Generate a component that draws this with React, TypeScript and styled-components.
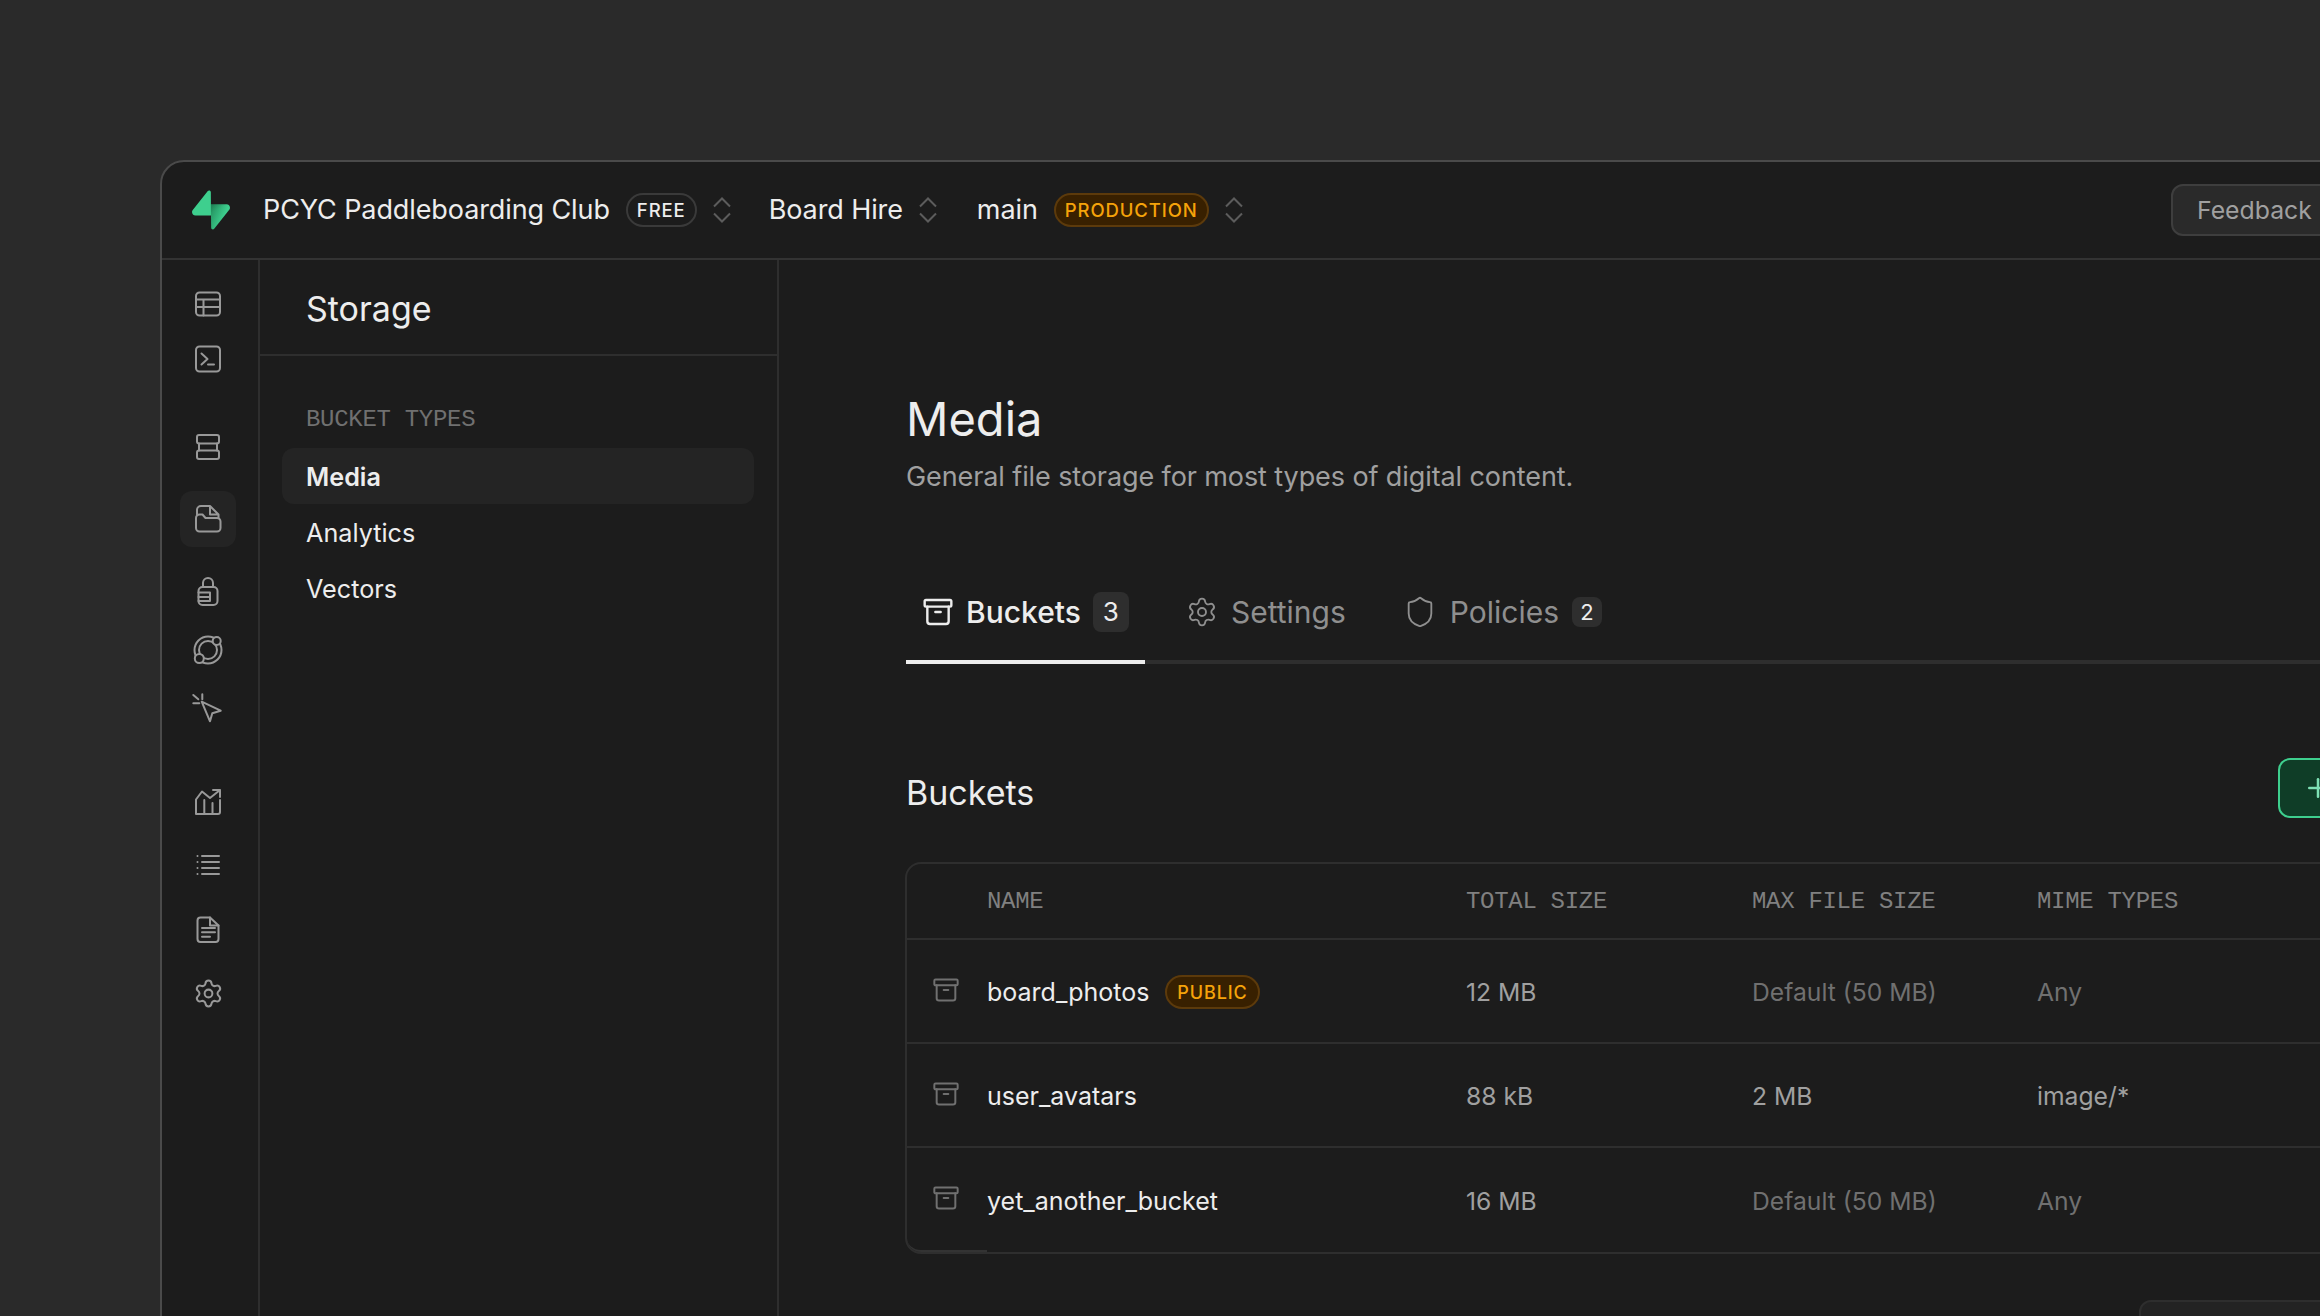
import React from 'react';
import styled, { createGlobalStyle } from 'styled-components';
import { Archive, Plus, Settings, Shield } from 'lucide-react';

const SANS = '"Inter", "Liberation Sans", sans-serif';
const MONO = '"Liberation Mono", monospace';

const GlobalStyle = createGlobalStyle`
  html, body {
    margin: 0;
    padding: 0;
    background: #2a2a2a;
    font-family: ${SANS};
    color: #ededed;
  }
  * {
    box-sizing: border-box;
  }
`;

const Page = styled.div`
  width: 100vw;
  height: 100vh;
  overflow: hidden;
  padding: 160px 0 0 160px;
  background: #2a2a2a;
`;

const Window = styled.div`
  width: 2400px;
  height: 1400px;
  display: flex;
  flex-direction: column;
  background: #1c1c1c;
  border: 2px solid #4a4a4a;
  border-radius: 24px 0 0 0;
`;

const Header = styled.header`
  height: 98px;
  flex: none;
  display: flex;
  align-items: center;
  padding: 0 219px 0 30px;
  border-bottom: 2px solid #333333;
`;

const Logo = styled.svg`
  width: 38px;
  height: 40px;
  margin-right: 33px;
  flex: none;
`;

const Crumb = styled.span`
  font-size: 27px;
  line-height: 40px;
  letter-spacing: -0.1px;
  white-space: nowrap;
  color: #ededed;
`;

const Pill = styled.span<{ $amber?: boolean }>`
  height: 34px;
  display: inline-flex;
  align-items: center;
  margin-left: 16px;
  padding: 0 9px;
  border-radius: 17px;
  font-size: 18.5px;
  font-weight: 500;
  letter-spacing: 0.9px;
  white-space: nowrap;
  border: 2px solid ${({ $amber }) => ($amber ? '#5c3a0b' : '#3a3a3a')};
  background: ${({ $amber }) => ($amber ? '#382000' : 'transparent')};
  color: ${({ $amber }) => ($amber ? '#f5a30a' : '#ededed')};
`;

const Updown = styled.svg<{ $after: number }>`
  width: 18px;
  height: 26px;
  margin: 0 ${({ $after }) => $after}px 0 16px;
  flex: none;
  fill: none;
  stroke: #5c5c5c;
  stroke-width: 2;
`;

const Feedback = styled.button`
  margin-left: auto;
  width: 168px;
  height: 52px;
  flex: none;
  padding: 0 0 0 24px;
  text-align: left;
  white-space: nowrap;
  font-family: ${SANS};
  font-size: 24.8px;
  color: #a0a0a0;
  background: #2a2a2a;
  border: 2px solid #3e3e3e;
  border-radius: 12px;
`;

const Body = styled.div`
  flex: 1;
  display: flex;
  min-height: 0;
`;

const Rail = styled.nav`
  width: 98px;
  flex: none;
  display: flex;
  flex-direction: column;
  align-items: center;
  padding-top: 16px;
  padding-right: 4px;
  border-right: 2px solid #2e2e2e;
`;

const RailButton = styled.div<{ $gap: number; $active?: boolean }>`
  width: 56px;
  height: 56px;
  flex: none;
  display: flex;
  align-items: center;
  justify-content: center;
  margin-top: ${({ $gap }) => $gap}px;
  border-radius: 12px;
  background: ${({ $active }) => ($active ? '#242424' : 'transparent')};
  color: #999999;
`;

const RailSvg = styled.svg`
  width: 36px;
  height: 36px;
  fill: none;
  stroke: currentColor;
  stroke-width: 2;
  stroke-linecap: round;
  stroke-linejoin: round;
`;

const Side = styled.aside`
  width: 519px;
  flex: none;
  border-right: 2px solid #2e2e2e;
`;

const SideHead = styled.div`
  height: 96px;
  display: flex;
  align-items: center;
  padding: 2px 0 0 46px;
  border-bottom: 2px solid #2e2e2e;
  font-size: 34px;
  color: #ededed;
`;

const SideNav = styled.div`
  padding: 50px 23px 0 22px;
`;

const SideLabel = styled.div`
  padding-left: 24px;
  margin-bottom: 14px;
  font-family: ${MONO};
  font-size: 24px;
  line-height: 28px;
  letter-spacing: -0.3px;
  color: #707070;
`;

const SideItem = styled.div<{ $active?: boolean }>`
  height: 56px;
  display: flex;
  align-items: center;
  padding: 1px 0 0 24px;
  border-radius: 12px;
  font-size: 25.2px;
  font-weight: ${({ $active }) => ($active ? 600 : 400)};
  background: ${({ $active }) => ($active ? '#242424' : 'transparent')};
  color: #ededed;
`;

const Main = styled.main`
  flex: 1;
  min-width: 0;
  padding: 128px 120px 0 127px;
`;

const Title = styled.h1`
  margin: 0;
  font-size: 47px;
  line-height: 62px;
  font-weight: 400;
  color: #ededed;
`;

const Subtitle = styled.p`
  margin: 7px 0 0;
  font-size: 27px;
  line-height: 40px;
  letter-spacing: -0.1px;
  color: #a0a0a0;
`;

const Tabs = styled.div`
  display: flex;
  gap: 27px;
  margin-top: 79px;
  border-bottom: 4px solid #2e2e2e;
`;

const Tab = styled.div<{ $active?: boolean }>`
  height: 88px;
  display: flex;
  align-items: center;
  gap: ${({ $active }) => ($active ? 12 : 13)}px;
  margin-bottom: -4px;
  padding: 0 16px 13px ${({ $active }) => ($active ? 16 : 14)}px;
  font-size: 30px;
  font-weight: ${({ $active }) => ($active ? 500 : 400)};
  color: ${({ $active }) => ($active ? '#ededed' : '#8f8f8f')};
  border-bottom: 4px solid ${({ $active }) => ($active ? '#ededed' : 'transparent')};
`;

const TabCount = styled.span<{ $large?: boolean }>`
  width: ${({ $large }) => ($large ? 36 : 30)}px;
  height: ${({ $large }) => ($large ? 40 : 30)}px;
  display: flex;
  align-items: center;
  justify-content: center;
  border-radius: 8px;
  background: #2e2e2e;
  color: #ededed;
  font-size: ${({ $large }) => ($large ? 26 : 22)}px;
  font-weight: 400;
`;

const SectionRow = styled.div`
  display: flex;
  align-items: flex-end;
  justify-content: space-between;
  margin-top: 94px;
`;

const SectionTitle = styled.h2`
  margin: 0;
  font-size: 34px;
  line-height: 50px;
  font-weight: 400;
  color: #ededed;
`;

const CreateButton = styled.button`
  width: 160px;
  height: 60px;
  display: flex;
  align-items: center;
  padding: 0 0 0 23px;
  border: 2px solid #3ecf8e;
  border-radius: 12px;
  background: #0f3d27;
  color: #7ee0b4;
`;

const Table = styled.div`
  margin: 44px 0 0 -1px;
  border: 2px solid #2e2e2e;
  border-radius: 16px;
`;

const Row = styled.div<{ $head?: boolean; $last?: boolean }>`
  height: ${({ $head }) => ($head ? 76 : 104)}px;
  padding-top: ${({ $head }) => ($head ? 0 : 2)}px;
  display: grid;
  grid-template-columns: 80px 479px 286px 285px 1fr;
  align-items: center;
  border-bottom: ${({ $last }) => ($last ? 'none' : '2px solid #2e2e2e')};
`;

const IconCell = styled.div<{ $last?: boolean }>`
  align-self: stretch;
  display: flex;
  align-items: center;
  justify-content: center;
  padding: 0 2px 4px 0;
  color: #707070;
  border-bottom: ${({ $last }) => ($last ? '2px solid #333333' : 'none')};
  border-bottom-left-radius: ${({ $last }) => ($last ? '14px' : '0')};
`;

const HeadCell = styled.div`
  font-family: ${MONO};
  font-size: 24px;
  letter-spacing: -0.3px;
  color: #808080;
`;

const NameCell = styled.div`
  display: flex;
  align-items: center;
  font-size: 25px;
  color: #ededed;
`;

const Cell = styled.div<{ $tone: 'mid' | 'dim' }>`
  font-size: 24.7px;
  color: ${({ $tone }) => ($tone === 'mid' ? '#a0a0a0' : '#707070')};
`;

const PublicPill = styled(Pill)`
  margin-left: 16px;
  padding: 0 10px;
  font-size: 18px;
`;

const Pager = styled.div`
  width: 299px;
  height: 60px;
  margin: 46px 0 0 auto;
  border: 2px solid #2e2e2e;
  border-radius: 12px;
  background: #232323;
`;

function UpdownIcon({ after }: { after: number }) {
  return (
    <Updown $after={after} viewBox="0 0 18 26">
      <path d="M1 9.5 9 1.5l8 8M1 16.5l8 8 8-8" />
    </Updown>
  );
}

const railItems: { gap: number; active?: boolean; icon: React.ReactNode }[] = [
  {
    gap: 0,
    icon: (
      <RailSvg viewBox="0 0 36 36">
        <rect x="6" y="6.5" width="24" height="23" rx="3.5" />
        <path d="M6 13.5h24M6 21h24M13.5 13.5v16" />
      </RailSvg>
    ),
  },
  {
    gap: -1,
    icon: (
      <RailSvg viewBox="0 0 36 36">
        <rect x="6" y="5.5" width="24" height="25" rx="3.5" />
        <path d="m11.5 12.5 6 5.5-6 5.5M18 23.5h6" />
      </RailSvg>
    ),
  },
  {
    gap: 32,
    icon: (
      <RailSvg viewBox="0 0 36 36">
        <rect x="7" y="6" width="22" height="8.5" rx="2" />
        <rect x="7" y="21.5" width="22" height="8.5" rx="2" />
        <path d="M9 14.5v7M27 14.5v7" />
      </RailSvg>
    ),
  },
  {
    gap: 16,
    active: true,
    icon: (
      <RailSvg viewBox="0 0 36 36">
        <path d="M6 27V17a3.500 3.500 0 0 1 3.500-3.500h3l3 3.500H27a3.500 3.500 0 0 1 3.500 3.500V27a3.500 3.500 0 0 1-3.500 3.500H9.500A3.500 3.500 0 0 1 6 27Z" />
        <path d="M7 13.500V9a4 4 0 0 1 4-4h9l8.500 8.500V17M20 5v8.500h8.500" />
      </RailSvg>
    ),
  },
  {
    gap: 17,
    icon: (
      <RailSvg viewBox="0 0 36 36">
        <rect x="8.500" y="13" width="19" height="18" rx="4" />
        <path d="M13 13V9a5 5 0 0 1 10 0v4M8.500 18.500H20V27H8.500M8.500 23H20" />
      </RailSvg>
    ),
  },
  {
    gap: 2,
    icon: (
      <RailSvg viewBox="0 0 36 36">
        <circle cx="18" cy="18" r="13.500" />
        <circle cx="18" cy="18" r="9" />
        <circle cx="26.700" cy="9" r="4" fill="#1c1c1c" />
        <circle cx="9.300" cy="26.500" r="4.500" fill="#1c1c1c" />
      </RailSvg>
    ),
  },
  {
    gap: 2,
    icon: (
      <RailSvg viewBox="0 0 36 36">
        <path d="m11.700 11.700 19 9-8.400 2.600-2.300 8Z" />
        <path d="m3.300 5 5 4.300M12.300 4.300v5M3.300 13.300h6" />
      </RailSvg>
    ),
  },
  {
    gap: 38,
    icon: (
      <RailSvg viewBox="0 0 36 36">
        <path d="M6 30V15.500l6-8 8 6.500 10-8M23 6h7v7M30 16v12a2 2 0 0 1-2 2H6M14.300 16v14M22.500 19v11" />
      </RailSvg>
    ),
  },
  {
    gap: 7,
    icon: (
      <RailSvg viewBox="0 0 36 36">
        <path d="M12 9h17M12 15h17M12 21h17M12 27h17M7.500 9h.01M7.500 15h.01M7.500 21h.01M7.500 27h.01" />
      </RailSvg>
    ),
  },
  {
    gap: 9,
    icon: (
      <RailSvg viewBox="0 0 36 36">
        <path d="M10.500 5.500H20l8.500 8V27a3 3 0 0 1-3 3h-15a3 3 0 0 1-3-3V8.500a3 3 0 0 1 3-3Z" />
        <path d="M20 5.500v8h8.500M12 16h13M12 20.300h13M12 24.700h8" />
      </RailSvg>
    ),
  },
  {
    gap: 7,
    icon: <Settings size={31} strokeWidth={1.55} />,
  },
];

const buckets = [
  { name: 'board_photos', isPublic: true, total: '12 MB', max: 'Default (50 MB)', maxTone: 'dim', mime: 'Any', mimeTone: 'dim' },
  { name: 'user_avatars', isPublic: false, total: '88 kB', max: '2 MB', maxTone: 'mid', mime: 'image/*', mimeTone: 'mid' },
  { name: 'yet_another_bucket', isPublic: false, total: '16 MB', max: 'Default (50 MB)', maxTone: 'dim', mime: 'Any', mimeTone: 'dim' },
] as const;

export default function App() {
  return (
    <Page>
      <GlobalStyle />
      <Window>
        <Header>
          <Logo viewBox="0 0 109 113" fill="none">
            <path
              d="M63.7076 110.284C60.8481 113.885 55.0502 111.912 54.9813 107.314L53.9738 40.0627L99.1935 40.0627C107.384 40.0627 111.952 49.5228 106.859 55.9374L63.7076 110.284Z"
              fill="url(#logo_a)"
            />
            <path
              d="M63.7076 110.284C60.8481 113.885 55.0502 111.912 54.9813 107.314L53.9738 40.0627L99.1935 40.0627C107.384 40.0627 111.952 49.5228 106.859 55.9374L63.7076 110.284Z"
              fill="url(#logo_b)"
              fillOpacity="0.2"
            />
            <path
              d="M45.317 2.07103C48.1765 -1.53037 53.9745 0.442937 54.0434 5.041L54.4849 72.2922H9.83113C1.64038 72.2922 -2.92775 62.8321 2.1655 56.4175L45.317 2.07103Z"
              fill="#3ECF8E"
            />
            <defs>
              <linearGradient id="logo_a" x1="53.9738" y1="54.974" x2="94.1635" y2="71.8295" gradientUnits="userSpaceOnUse">
                <stop stopColor="#249361" />
                <stop offset="1" stopColor="#3ECF8E" />
              </linearGradient>
              <linearGradient id="logo_b" x1="36.1558" y1="30.578" x2="54.4844" y2="65.0806" gradientUnits="userSpaceOnUse">
                <stop />
                <stop offset="1" stopOpacity="0" />
              </linearGradient>
            </defs>
          </Logo>
          <Crumb>PCYC Paddleboarding Club</Crumb>
          <Pill>FREE</Pill>
          <UpdownIcon after={38} />
          <Crumb>Board Hire</Crumb>
          <UpdownIcon after={40} />
          <Crumb>main</Crumb>
          <Pill $amber>PRODUCTION</Pill>
          <UpdownIcon after={0} />
          <Feedback>Feedback</Feedback>
        </Header>
        <Body>
          <Rail>
            {railItems.map((item, i) => (
              <RailButton key={i} $gap={item.gap} $active={item.active}>
                {item.icon}
              </RailButton>
            ))}
          </Rail>
          <Side>
            <SideHead>Storage</SideHead>
            <SideNav>
              <SideLabel>BUCKET TYPES</SideLabel>
              <SideItem $active>Media</SideItem>
              <SideItem>Analytics</SideItem>
              <SideItem>Vectors</SideItem>
            </SideNav>
          </Side>
          <Main>
            <Title>Media</Title>
            <Subtitle>General file storage for most types of digital content.</Subtitle>
            <Tabs>
              <Tab $active>
                <Archive size={32} strokeWidth={1.8} />
                Buckets
                <TabCount $large>3</TabCount>
              </Tab>
              <Tab>
                <Settings size={32} strokeWidth={1.4} />
                Settings
              </Tab>
              <Tab>
                <Shield size={34} strokeWidth={1.3} />
                Policies
                <TabCount>2</TabCount>
              </Tab>
            </Tabs>
            <SectionRow>
              <SectionTitle>Buckets</SectionTitle>
              <CreateButton>
                <Plus size={30} strokeWidth={2} />
              </CreateButton>
            </SectionRow>
            <Table>
              <Row $head>
                <span />
                <HeadCell>NAME</HeadCell>
                <HeadCell>TOTAL SIZE</HeadCell>
                <HeadCell>MAX FILE SIZE</HeadCell>
                <HeadCell>MIME TYPES</HeadCell>
              </Row>
              {buckets.map((b, i) => (
                <Row key={b.name} $last={i === buckets.length - 1}>
                  <IconCell $last={i === buckets.length - 1}>
                    <Archive size={28} strokeWidth={1.7} />
                  </IconCell>
                  <NameCell>
                    {b.name}
                    {b.isPublic && <PublicPill $amber>PUBLIC</PublicPill>}
                  </NameCell>
                  <Cell $tone="mid">{b.total}</Cell>
                  <Cell $tone={b.maxTone}>{b.max}</Cell>
                  <Cell $tone={b.mimeTone}>{b.mime}</Cell>
                </Row>
              ))}
            </Table>
            <Pager />
          </Main>
        </Body>
      </Window>
    </Page>
  );
}
